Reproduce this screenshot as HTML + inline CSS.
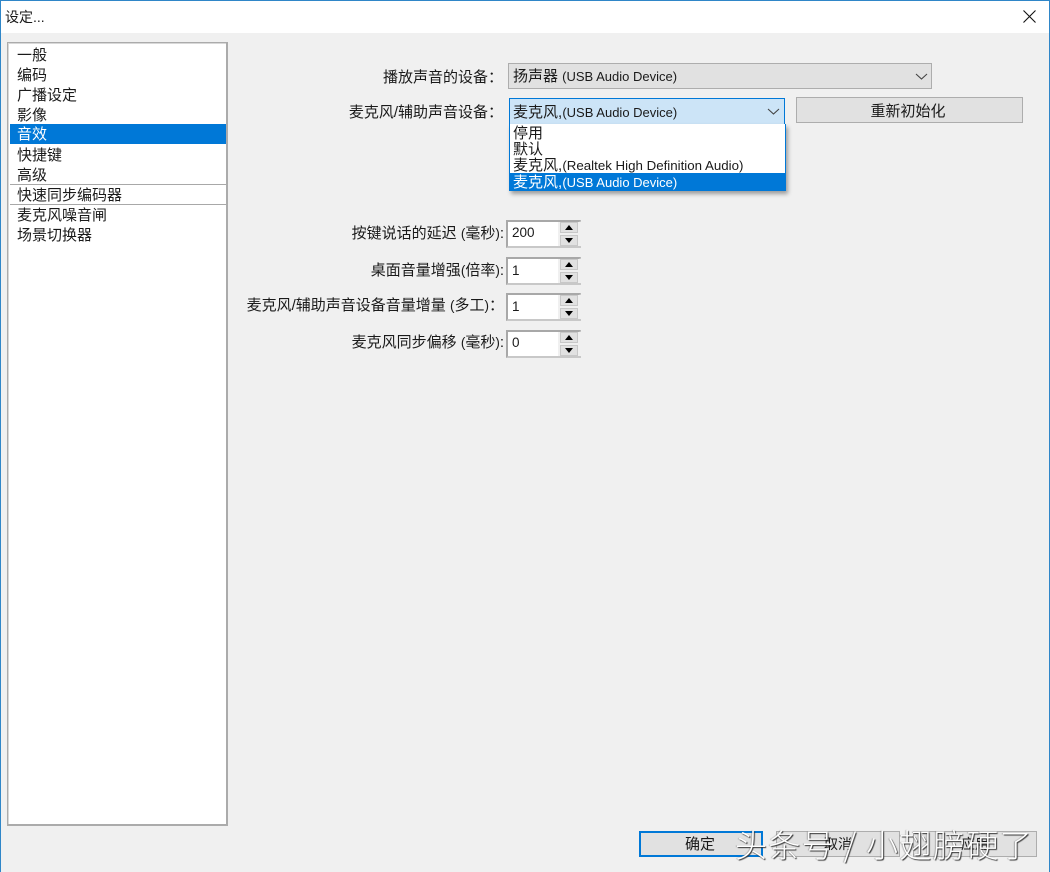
<!DOCTYPE html>
<html lang="zh"><head><meta charset="utf-8"><title>设定...</title>
<style>
html,body{margin:0;padding:0;width:1050px;height:872px;overflow:hidden;background:#f0f0f0}
body{position:relative;font:15px/20px "Liberation Sans","Noto Sans CJK SC",sans-serif;color:#1a1a1a}
div{position:absolute;box-sizing:border-box;white-space:nowrap}
.it{left:17px;height:20px;line-height:20px}
.lb{text-align:right;height:20px;line-height:20px;font-size:15px}
.lb i{font-style:normal;font-size:13.5px}
.combo{border:1px solid #adadad;background:#e1e1e1;height:26px}
.btn{border:1px solid #adadad;background:#e1e1e1;text-align:center}
.spin{left:506px;width:75px;border:2px solid #c8c8c8;border-top-color:#a8a8a8;border-left-color:#a8a8a8;background:#fff;height:28px}
.spin .v{left:4px;top:0;height:20px;line-height:20px;font-size:13.5px}
.spin .sb{left:50px;top:0;width:23px;height:24px;background:#f0f0f0}
.spin .u,.spin .d{left:2px;width:18px;height:11px;background:#e1e1e1;border:1px solid #c8c8c8}
.spin .u{top:0}.spin .d{top:13px}
.u:after,.d:after{content:"";position:absolute;left:4px;width:0;height:0;border-left:4px solid transparent;border-right:4px solid transparent}
.u:after{top:2px;border-bottom:5px solid #000}
.d:after{top:2px;border-top:5px solid #000}
.dd{left:513px;height:16px;line-height:16px;font-size:15px}
.dd i,.t i{font-style:normal;font-size:13px}
.t{font-size:15px;line-height:20px}
</style></head><body>
<div style="left:0;top:0;width:1050px;height:33px;background:#fff"></div>
<div style="left:0;top:0;width:1050px;height:1px;background:#2f86c8"></div>
<div style="left:0;top:0;width:1px;height:872px;background:#2f86c8"></div>
<div style="right:0;top:0;width:1px;height:872px;background:#2f86c8"></div>
<div style="left:5px;top:7px;font-size:14px;line-height:20px">设定...</div>
<svg style="position:absolute;left:1023px;top:10px" width="13" height="13" viewBox="0 0 13 13"><path d="M0.5 0.5L12.5 12.5M12.5 0.5L0.5 12.5" stroke="#111" stroke-width="1.1" fill="none"/></svg>

<div style="left:7px;top:42px;width:221px;height:784px;background:#fff;border:1px solid #ababab;border-right-width:2px;border-bottom-width:2px;box-shadow:inset 1px 1px 0 #d8d8d8"></div>
<div style="left:10px;top:124px;width:216px;height:20px;background:#0078d7"></div>
<div style="left:10px;top:184px;width:216px;height:1px;background:#a8a8a8"></div>
<div style="left:10px;top:204px;width:216px;height:1px;background:#a8a8a8"></div>
<div class="it" style="top:46px">一般</div>
<div class="it" style="top:66px">编码</div>
<div class="it" style="top:86px">广播设定</div>
<div class="it" style="top:106px">影像</div>
<div class="it" style="top:125px;color:#fff">音效</div>
<div class="it" style="top:146px">快捷键</div>
<div class="it" style="top:166px">高级</div>
<div class="it" style="top:186px">快速同步编码器</div>
<div class="it" style="top:206px">麦克风噪音闸</div>
<div class="it" style="top:226px">场景切换器</div>

<div class="lb" style="left:340px;width:163px;top:68px">播放声音的设备：</div>
<div class="combo" style="left:508px;top:63px;width:424px"></div>
<div class="t" style="left:513px;top:67px">扬声器 <i>(USB Audio Device)</i></div>
<svg style="position:absolute;left:915px;top:73px" width="13" height="7" viewBox="0 0 13 7"><path d="M1 1L6.5 6L12 1" stroke="#444" stroke-width="1.1" fill="none"/></svg>

<div class="lb" style="left:340px;width:163px;top:103px">麦克风/辅助声音设备：</div>
<div style="left:509px;top:98px;width:276px;height:27px;background:#cce4f7;border:1px solid #0078d7"></div>
<div class="t" style="left:513px;top:103px">麦克风, <i style="margin-left:-4px">(USB Audio Device)</i></div>
<svg style="position:absolute;left:767px;top:108px" width="13" height="7" viewBox="0 0 13 7"><path d="M1 1L6.5 6L12 1" stroke="#444" stroke-width="1.1" fill="none"/></svg>
<div class="btn" style="left:796px;top:97px;width:227px;height:26px;line-height:27px;font-size:15px;padding-right:3px">重新初始化</div>

<div style="left:509px;top:124px;width:277px;height:67px;background:#fff;border:1px solid #0078d7;border-top:0;box-shadow:2px 3px 4px rgba(0,0,0,.35)"></div>
<div style="left:509px;top:173px;width:277px;height:18px;background:#0078d7"></div>
<div class="dd" style="top:126px">停用</div>
<div class="dd" style="top:142px">默认</div>
<div class="dd" style="top:158px">麦克风, <i style="font-size:13.3px;margin-left:-4px">(Realtek High Definition Audio)</i></div>
<div class="dd" style="top:175px;color:#fff">麦克风, <i style="margin-left:-4px">(USB Audio Device)</i></div>

<div class="lb" style="left:240px;width:264px;top:224px">按键说话的延迟 <i>(</i>毫秒<i>)</i>:</div>
<div class="lb" style="left:240px;width:264px;top:261px">桌面音量增强<i>(</i>倍率<i>)</i>:</div>
<div class="lb" style="left:240px;width:264px;top:296px;font-size:15px">麦克风/辅助声音设备音量增量 <i>(</i>多工<i>)</i>：</div>
<div class="lb" style="left:240px;width:264px;top:333px">麦克风同步偏移 <i>(</i>毫秒<i>)</i>:</div>

<div class="spin" style="top:220px"><div class="v" style="top:1px">200</div><div class="sb"><div class="u"></div><div class="d"></div></div></div>
<div class="spin" style="top:257px"><div class="v" style="top:2px">1</div><div class="sb"><div class="u"></div><div class="d"></div></div></div>
<div class="spin" style="top:293px"><div class="v" style="top:2px">1</div><div class="sb"><div class="u"></div><div class="d"></div></div></div>
<div class="spin" style="top:330px"><div class="v" style="top:1px">0</div><div class="sb"><div class="u"></div><div class="d"></div></div></div>

<div class="btn" style="left:639px;top:831px;width:124px;height:26px;line-height:23px;border:2px solid #0078d7;font-size:15px;padding-right:2px">确定</div>
<div class="btn" style="left:776px;top:831px;width:124px;height:26px;line-height:24px;font-size:14px">取消</div>
<div class="btn" style="left:913px;top:831px;width:124px;height:26px;line-height:24px;font-size:14px">应用</div>

<div style="left:735px;top:824px;height:40px;line-height:40px;font-size:32px;font-weight:300;color:#fff;letter-spacing:1.4px;text-shadow:1px 1px 1px #333,-1px 0 1px rgba(60,60,60,.35);font-family:'Noto Sans CJK SC',sans-serif">头条号 / 小翅膀硬了</div>
</body></html>
